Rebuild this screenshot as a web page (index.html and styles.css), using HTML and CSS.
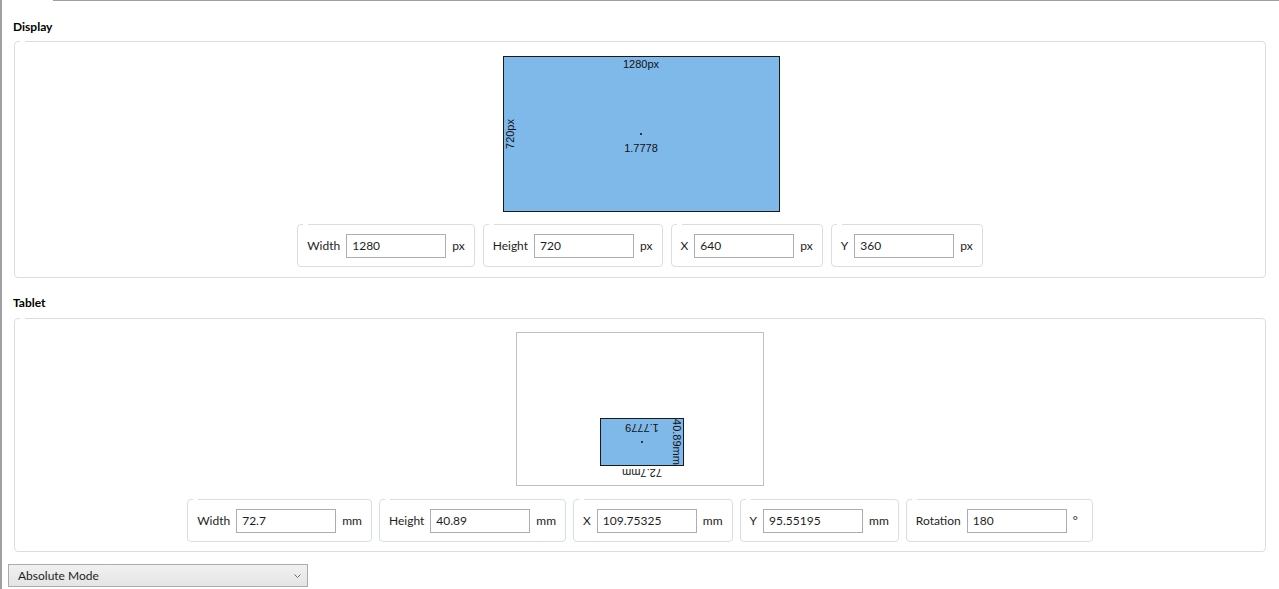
FILE: index.html
```html
<!DOCTYPE html>
<html>
<head>
<meta charset="utf-8">
<link rel="stylesheet" href="styles.css">
</head>
<body>
<div class="app">
  <div class="topline"></div>

  <div class="section-title">Display</div>
  <div class="group group-display">
    <div class="screen">
      <span class="lbl lbl-top">1280px</span>
      <span class="lbl lbl-side">720px</span>
      <span class="dot"></span>
      <span class="lbl lbl-ratio">1.7778</span>
    </div>
    <div class="fields fields-display">
      <div class="field"><span class="field-label">Width</span><input class="field-input" value="1280"><span class="unit">px</span></div>
      <div class="field"><span class="field-label">Height</span><input class="field-input" value="720"><span class="unit">px</span></div>
      <div class="field"><span class="field-label">X</span><input class="field-input" value="640"><span class="unit">px</span></div>
      <div class="field"><span class="field-label">Y</span><input class="field-input" value="360"><span class="unit">px</span></div>
    </div>
  </div>

  <div class="section-title section-title-tablet">Tablet</div>
  <div class="group group-tablet">
    <div class="tablet-area">
      <div class="pen-area">
        <span class="lbl lbl-above">72.7mm</span>
        <span class="lbl lbl-side">40.89mm</span>
        <span class="dot"></span>
        <span class="lbl lbl-ratio">1.7779</span>
      </div>
    </div>
    <div class="fields fields-tablet">
      <div class="field"><span class="field-label">Width</span><input class="field-input" value="72.7"><span class="unit">mm</span></div>
      <div class="field"><span class="field-label">Height</span><input class="field-input" value="40.89"><span class="unit">mm</span></div>
      <div class="field"><span class="field-label">X</span><input class="field-input" value="109.75325"><span class="unit">mm</span></div>
      <div class="field"><span class="field-label">Y</span><input class="field-input" value="95.55195"><span class="unit">mm</span></div>
      <div class="field"><span class="field-label">Rotation</span><input class="field-input" value="180"><span class="unit unit-deg">°</span></div>
    </div>
  </div>

  <div class="mode-select">
    <span>Absolute Mode</span>
    <svg class="chevron" width="7" height="4" viewBox="0 0 7 4"><path d="M0.5 0.5 L3.5 3.5 L6.5 0.5" fill="none" stroke="#707070" stroke-width="1"/></svg>
  </div>
</div>
</body>
</html>
```

FILE: styles.css
```css
html, body {
  margin: 0;
  padding: 0;
  background: #ffffff;
}

body {
  font-family: Lato, "Noto Sans", "Segoe UI", sans-serif;
  font-size: 12px;
  line-height: 16px;
  color: #1e1e1e;
}

.app {
  height: 589px;
  box-sizing: border-box;
  border-left: 2px solid #a0a0a0;
  overflow: hidden;
}

.topline {
  height: 1px;
  margin-left: 51px;
  background: #a0a0a0;
}

.section-title {
  font-weight: 700;
  color: #000;
  margin: 18px 0 6px 11px;
}

.section-title-tablet {
  margin-top: 17px;
  margin-bottom: 7px;
}

.group {
  position: relative;
  margin: 0 13px 0 12px;
  border: 1px solid #d5dfe5;
  border-radius: 4px;
  display: flex;
  flex-direction: column;
  align-items: center;
}

.group::before,
.field::before {
  content: "";
  position: absolute;
  top: -1px;
  left: 5px;
  width: 5px;
  height: 1px;
  background: #ffffff;
}

.group-display {
  padding: 14px 0 10px;
}

.group-tablet {
  padding: 13px 0 9px;
}

/* display canvas */
.screen {
  position: relative;
  left: 1px;
  width: 277px;
  height: 156px;
  box-sizing: border-box;
  border: 1px solid #1a1a1a;
  background: #7fb9ea;
}

.lbl {
  position: absolute;
  font-family: "Liberation Sans", Arial, sans-serif;
  font-size: 11px;
  line-height: 13px;
  color: #111;
  white-space: nowrap;
}

.lbl-top {
  top: 1px;
  left: 50%;
  transform: translateX(-50%);
}

.lbl-side {
  left: 0;
  top: 50%;
  writing-mode: vertical-rl;
  transform: translateY(-50%) rotate(180deg);
}

.lbl-ratio {
  left: 50%;
  top: calc(50% + 8px);
  transform: translateX(-50%);
}

.lbl-above {
  left: 50%;
  top: -14px;
  transform: translateX(-50%);
}

.dot {
  position: absolute;
  left: calc(50% - 1px);
  top: calc(50% - 1px);
  width: 2px;
  height: 2px;
  background: #333;
}

/* tablet canvas */
.tablet-area {
  position: relative;
  width: 248px;
  height: 154px;
  box-sizing: border-box;
  border: 1px solid #c0c0c0;
  background: #ffffff;
}

.pen-area {
  position: absolute;
  left: 83px;
  top: 85px;
  width: 84px;
  height: 48px;
  box-sizing: border-box;
  border: 1px solid #1a1a1a;
  background: #7fb9ea;
  transform: rotate(180deg);
}

/* fields */
.fields {
  display: flex;
  gap: 8px;
  margin-top: 12px;
}

.fields-tablet {
  gap: 7px;
  margin-top: 13px;
}

.field {
  position: relative;
  height: 43px;
  box-sizing: border-box;
  border: 1px solid #d5dfe5;
  border-radius: 4px;
  padding: 0 9px;
  display: flex;
  align-items: center;
}

.field-label {
  color: #1e1e1e;
}

.field-input {
  width: 100px;
  height: 24px;
  box-sizing: border-box;
  margin: 0 6px;
  padding: 0 5px;
  border: 1px solid #abadb3;
  border-radius: 0;
  font-family: inherit;
  font-size: 12px;
  color: #1e1e1e;
  background: #ffffff;
  outline: none;
}

.unit {
  color: #222;
}

.unit-deg {
  min-width: 10px;
}

/* mode dropdown */
.mode-select {
  margin: 12px 0 0 6px;
  width: 300px;
  height: 23px;
  box-sizing: border-box;
  border: 1px solid #acacac;
  background: linear-gradient(#f0f0f0, #e5e5e5);
  display: flex;
  align-items: center;
  justify-content: space-between;
  padding: 0 6px 0 9px;
  color: #1e1e1e;
}

.chevron {
  display: block;
}
```
